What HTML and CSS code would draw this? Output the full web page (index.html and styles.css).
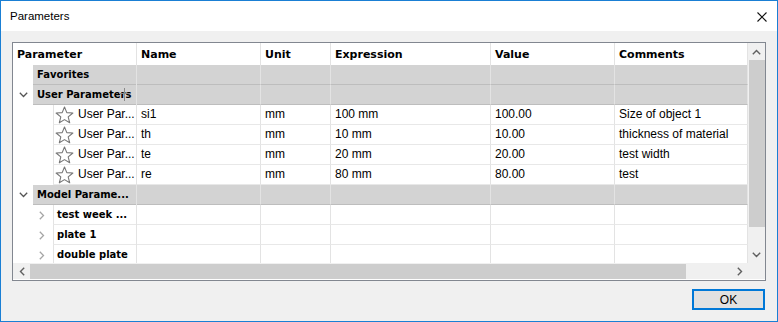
FILE: index.html
```html
<!DOCTYPE html>
<html lang="en">
<head>
    <meta charset="UTF-8">
    <title>Parameters</title>
    <link rel="stylesheet" href="styles.css">
</head>
<body>
    <div class="window">
        <div class="titlebar">
            <span class="title">Parameters</span>
            <svg class="close" width="10" height="10" viewBox="0 0 10 10">
                <path d="M0.5 0.5 L9.5 9.5 M9.5 0.5 L0.5 9.5" stroke="#111" stroke-width="1.1" fill="none"/>
            </svg>
        </div>

        <div class="content">
            <div class="frame">
                <div class="grid">
                    <div class="row head">
                        <div class="cell">Parameter</div>
                        <div class="cell">Name</div>
                        <div class="cell">Unit</div>
                        <div class="cell">Expression</div>
                        <div class="cell">Value</div>
                        <div class="cell">Comments</div>
                    </div>

                    <div class="row group">
                        <div class="cell first"><span class="pad"></span><span class="lbl">Favorites</span></div>
                        <div class="cell"></div><div class="cell"></div><div class="cell"></div><div class="cell"></div><div class="cell"></div>
                    </div>

                    <div class="row group">
                        <div class="cell first">
                            <span class="pad"><svg width="9" height="6" viewBox="0 0 9 6"><path d="M0.8 0.8 L4.5 4.5 L8.2 0.8" stroke="#555" stroke-width="1.3" fill="none"/></svg></span>
                            <span class="lbl">User Parameters</span>
                        </div>
                        <div class="cell"></div><div class="cell"></div><div class="cell"></div><div class="cell"></div><div class="cell"></div>
                    </div>

                    <div class="row item">
                        <div class="cell first"><span class="pad wide"></span><span class="lbl"><svg class="star" width="19" height="18" viewBox="0 0 19 18"><path d="M9.5 1 L11.8 6.6 L17.9 7 L13.2 10.9 L14.7 16.8 L9.5 13.6 L4.3 16.8 L5.8 10.9 L1.1 7 L7.2 6.6 Z" stroke="#777" stroke-width="1.1" fill="none" stroke-linejoin="round"/></svg>User Par...</span></div>
                        <div class="cell">si1</div><div class="cell">mm</div><div class="cell">100 mm</div><div class="cell">100.00</div><div class="cell">Size of object 1</div>
                    </div>
                    <div class="row item">
                        <div class="cell first"><span class="pad wide"></span><span class="lbl"><svg class="star" width="19" height="18" viewBox="0 0 19 18"><path d="M9.5 1 L11.8 6.6 L17.9 7 L13.2 10.9 L14.7 16.8 L9.5 13.6 L4.3 16.8 L5.8 10.9 L1.1 7 L7.2 6.6 Z" stroke="#777" stroke-width="1.1" fill="none" stroke-linejoin="round"/></svg>User Par...</span></div>
                        <div class="cell">th</div><div class="cell">mm</div><div class="cell">10 mm</div><div class="cell">10.00</div><div class="cell">thickness of material</div>
                    </div>
                    <div class="row item">
                        <div class="cell first"><span class="pad wide"></span><span class="lbl"><svg class="star" width="19" height="18" viewBox="0 0 19 18"><path d="M9.5 1 L11.8 6.6 L17.9 7 L13.2 10.9 L14.7 16.8 L9.5 13.6 L4.3 16.8 L5.8 10.9 L1.1 7 L7.2 6.6 Z" stroke="#777" stroke-width="1.1" fill="none" stroke-linejoin="round"/></svg>User Par...</span></div>
                        <div class="cell">te</div><div class="cell">mm</div><div class="cell">20 mm</div><div class="cell">20.00</div><div class="cell">test width</div>
                    </div>
                    <div class="row item">
                        <div class="cell first"><span class="pad wide"></span><span class="lbl"><svg class="star" width="19" height="18" viewBox="0 0 19 18"><path d="M9.5 1 L11.8 6.6 L17.9 7 L13.2 10.9 L14.7 16.8 L9.5 13.6 L4.3 16.8 L5.8 10.9 L1.1 7 L7.2 6.6 Z" stroke="#777" stroke-width="1.1" fill="none" stroke-linejoin="round"/></svg>User Par...</span></div>
                        <div class="cell">re</div><div class="cell">mm</div><div class="cell">80 mm</div><div class="cell">80.00</div><div class="cell">test</div>
                    </div>

                    <div class="row group">
                        <div class="cell first">
                            <span class="pad"><svg width="9" height="6" viewBox="0 0 9 6"><path d="M0.8 0.8 L4.5 4.5 L8.2 0.8" stroke="#555" stroke-width="1.3" fill="none"/></svg></span>
                            <span class="lbl">Model Parame...</span>
                        </div>
                        <div class="cell"></div><div class="cell"></div><div class="cell"></div><div class="cell"></div><div class="cell"></div>
                    </div>

                    <div class="row sub">
                        <div class="cell first"><span class="pad wide"><svg width="6" height="9" viewBox="0 0 6 9"><path d="M0.8 0.8 L4.5 4.5 L0.8 8.2" stroke="#a6a6a6" stroke-width="1.3" fill="none"/></svg></span><span class="lbl">test week ...</span></div>
                        <div class="cell"></div><div class="cell"></div><div class="cell"></div><div class="cell"></div><div class="cell"></div>
                    </div>
                    <div class="row sub">
                        <div class="cell first"><span class="pad wide"><svg width="6" height="9" viewBox="0 0 6 9"><path d="M0.8 0.8 L4.5 4.5 L0.8 8.2" stroke="#a6a6a6" stroke-width="1.3" fill="none"/></svg></span><span class="lbl">plate 1</span></div>
                        <div class="cell"></div><div class="cell"></div><div class="cell"></div><div class="cell"></div><div class="cell"></div>
                    </div>
                    <div class="row sub">
                        <div class="cell first"><span class="pad wide"><svg width="6" height="9" viewBox="0 0 6 9"><path d="M0.8 0.8 L4.5 4.5 L0.8 8.2" stroke="#a6a6a6" stroke-width="1.3" fill="none"/></svg></span><span class="lbl">double plate</span></div>
                        <div class="cell"></div><div class="cell"></div><div class="cell"></div><div class="cell"></div><div class="cell"></div>
                    </div>

                    <!-- resize cursor left over the column edge -->
                    <div class="cursor"></div>
                </div>

                <div class="vscroll">
                    <span class="arrow"><svg width="9" height="6" viewBox="0 0 9 6"><path d="M0.8 5.2 L4.5 1.5 L8.2 5.2" stroke="#606060" stroke-width="1.4" fill="none"/></svg></span>
                    <div class="vthumb"></div>
                    <div class="track"></div>
                    <span class="arrow"><svg width="9" height="6" viewBox="0 0 9 6"><path d="M0.8 0.8 L4.5 4.5 L8.2 0.8" stroke="#606060" stroke-width="1.4" fill="none"/></svg></span>
                </div>

                <div class="hscroll">
                    <span class="arrow"><svg width="6" height="9" viewBox="0 0 6 9"><path d="M5.2 0.8 L1.5 4.5 L5.2 8.2" stroke="#606060" stroke-width="1.4" fill="none"/></svg></span>
                    <div class="hthumb"></div>
                    <div class="track"></div>
                    <span class="arrow"><svg width="6" height="9" viewBox="0 0 6 9"><path d="M0.8 0.8 L4.5 4.5 L0.8 8.2" stroke="#606060" stroke-width="1.4" fill="none"/></svg></span>
                </div>
                <div class="corner"></div>
            </div>

            <div class="footer">
                <button class="ok">OK</button>
            </div>
        </div>
    </div>
</body>
</html>
```

FILE: styles.css
```css
html, body {
    margin: 0;
    padding: 0;
}
body {
    font-family: "Liberation Sans", Arial, sans-serif;
    font-size: 12px;
    color: #000;
    background: #f0f0f0;
}
.window {
    width: 778px;
    height: 322px;
    box-sizing: border-box;
    border: 1px solid #1a7fd4;
    background: #f0f0f0;
    display: flex;
    flex-direction: column;
}
.titlebar {
    height: 30px;
    background: #fff;
    display: flex;
    align-items: center;
    justify-content: space-between;
    padding: 0 10px 0 9px;
}
.title {
    font-size: 11.5px;
    color: #000;
    margin-top: -1px;
}
.close {
    margin-top: 1px;
}
.content {
    flex: 1;
    padding: 11px 11px 11px 11px;
    display: flex;
    flex-direction: column;
    gap: 8px;
}
.frame {
    height: 239px;
    box-sizing: border-box;
    border: 1px solid #828790;
    background: #fff;
    display: grid;
    grid-template-columns: 735px 17px;
    grid-template-rows: 220px 16px;
}
.grid {
    position: relative;
    overflow: hidden;
    background: #fff;
}
.row {
    display: grid;
    grid-template-columns: 124px 124px 70px 160px 124px 133px;
    height: 20px;
}
.cell {
    box-sizing: border-box;
    border-right: 1px solid #e3e3e3;
    border-bottom: 1px solid #e8e8e8;
    padding-left: 4px;
    line-height: 19px;
    white-space: nowrap;
    overflow: hidden;
}
.head {
    height: 22px;
}
.head .cell {
    border-bottom: none;
    font-family: "DejaVu Sans", Verdana, sans-serif;
    font-weight: bold;
    font-size: 11px;
    line-height: 23px;
}
.group .cell {
    background: #d3d3d3;
    border-bottom: 1px solid #bdbdbd;
}
.cell.first {
    display: flex;
    padding-left: 0;
    border-bottom: none;
    background: transparent;
}
.pad {
    width: 20px;
    flex: none;
    display: flex;
    align-items: center;
    justify-content: center;
    background: #fff;
}
.pad.wide {
    width: 40px;
    justify-content: flex-end;
    padding-right: 8px;
    box-sizing: border-box;
}
.lbl {
    flex: 1;
    display: flex;
    align-items: center;
    box-sizing: border-box;
    padding-left: 4px;
    border-bottom: 1px solid #e8e8e8;
}
.group .lbl {
    background: #d3d3d3;
    border-bottom: 1px solid #bdbdbd;
    font-family: "DejaVu Sans", Verdana, sans-serif;
    font-weight: bold;
    font-size: 10px;
}
.item .lbl, .sub .lbl {
    border-left: 1px solid #e3e3e3;
    padding-left: 2px;
}
.item .lbl {
    padding-left: 1px;
}
.star {
    margin-right: 4px;
    flex: none;
}
.sub .lbl {
    padding-left: 3px;
    font-family: "DejaVu Sans", Verdana, sans-serif;
    font-weight: bold;
    font-size: 10px;
}
.cursor {
    position: absolute;
    left: 106px;
    top: 45px;
    width: 11px;
    height: 13px;
    background:
        linear-gradient(#8a8a8a, #8a8a8a) 5px 0 / 1px 13px no-repeat,
        linear-gradient(#8a8a8a, #8a8a8a) 0 5px / 11px 1px no-repeat;
}
.vscroll {
    background: #f0f0f0;
    display: flex;
    flex-direction: column;
}
.vscroll .arrow {
    height: 17px;
    flex: none;
    display: flex;
    align-items: center;
    justify-content: center;
}
.vthumb {
    height: 167px;
    flex: none;
    background: #cdcdcd;
    margin-left: 1px;
}
.track {
    flex: 1;
}
.hscroll {
    background: #f0f0f0;
    display: flex;
}
.hscroll .arrow {
    width: 17px;
    flex: none;
    display: flex;
    align-items: center;
    justify-content: center;
}
.hthumb {
    width: 656px;
    flex: none;
    background: #cdcdcd;
    margin-top: 1px;
}
.corner {
    background: #f0f0f0;
}
.footer {
    display: flex;
    justify-content: flex-end;
    padding-right: 1px;
}
.ok {
    width: 73px;
    height: 21px;
    box-sizing: border-box;
    border: 2px solid #0078d7;
    background: #e1e1e1;
    font-family: "Liberation Sans", Arial, sans-serif;
    font-size: 12px;
    color: #000;
    padding: 0;
}
```
